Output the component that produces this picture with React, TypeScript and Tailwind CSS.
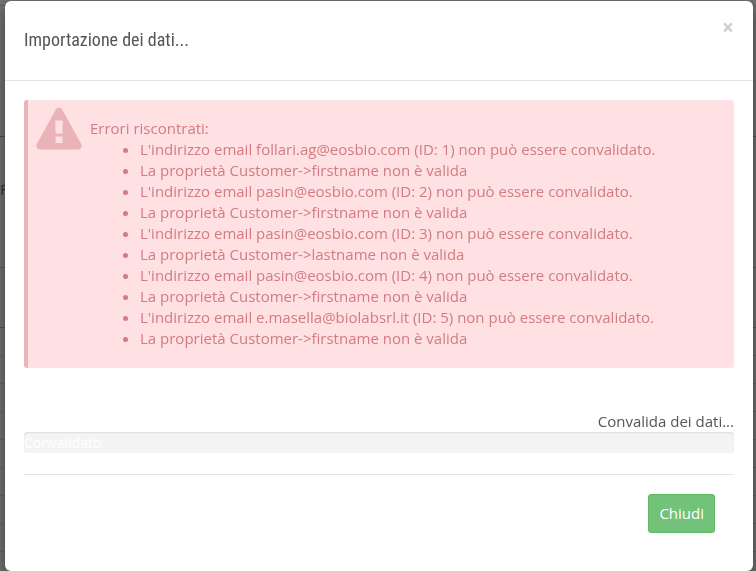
const errors = [
  "L'indirizzo email follari.ag@eosbio.com (ID: 1) non può essere convalidato.",
  'La proprietà Customer->firstname non è valida',
  "L'indirizzo email pasin@eosbio.com (ID: 2) non può essere convalidato.",
  'La proprietà Customer->firstname non è valida',
  "L'indirizzo email pasin@eosbio.com (ID: 3) non può essere convalidato.",
  'La proprietà Customer->lastname non è valida',
  "L'indirizzo email pasin@eosbio.com (ID: 4) non può essere convalidato.",
  'La proprietà Customer->firstname non è valida',
  "L'indirizzo email e.masella@biolabsrl.it (ID: 5) non può essere convalidato.",
  'La proprietà Customer->firstname non è valida',
];

const tableRows = [1, 2, 3, 4, 5, 6, 7, 8];

// Page dimmed behind the modal
function Backdrop() {
  return (
    <div aria-hidden="true" className="fixed inset-0 -z-10 overflow-hidden bg-[#747474] text-[#333]">
      <div className="h-1.5 border-b border-[#606060]"></div>
      <div className="h-[131px] border-b border-[#505050]"></div>
      <div className="h-[131px] border-b border-[#606060] pt-[42px] text-[15px] leading-[21px]">F</div>
      <div className="h-[60px] border-b border-[#4a5a66]"></div>
      {tableRows.map((row) => (
        <div key={row} className="h-7 border-b border-[#666]"></div>
      ))}
    </div>
  );
}

function WarningIcon() {
  return (
    <svg viewBox="0 0 46 43" className="h-[43px] w-[46px] shrink-0 fill-[#eab3b7]" aria-hidden="true">
      <path
        fillRule="evenodd"
        d="M23 0.5c1.4 0 2.5 0.7 3.2 1.9L45.2 37c1.4 2.6-0.3 5.5-3.2 5.5H4C1.1 42.5-0.6 39.6 0.8 37L19.8 2.4C20.5 1.2 21.6 0.5 23 0.5ZM19.3 13.500L19.6 26.500H26.400L26.700 13.500ZM19.600 29.500V36H26.400V29.500Z"
      />
    </svg>
  );
}

export default function App() {
  return (
    <div className="relative isolate min-h-screen pt-px pr-[7px] pl-[5px] font-['Open_Sans',sans-serif] text-[15px] leading-[21px] text-[#555]">
      <Backdrop />
      <div
        role="dialog"
        aria-labelledby="import-title"
        className="-mr-1 rounded-md bg-white pb-[38px] shadow-[0_5px_15px_rgba(0,0,0,0.5)]"
      >
        <div className="flex items-start justify-between border-b border-[#e5e5e5] px-[19px] pt-4 pb-[30px]">
          <h4
            id="import-title"
            className="pt-[13px] font-['Ubuntu_Condensed','Roboto_Condensed','Roboto',sans-serif] text-lg leading-5"
          >
            Importazione dei dati...
          </h4>
          <button type="button" aria-label="Close" className="text-[21px] leading-5 font-bold text-[#ccc]">
            ×
          </button>
        </div>

        <div className="px-[19px] pt-[19px]">
          <div className="flex rounded-[3px] border-l-4 border-[#eab3b7] bg-[#ffe1e3] pt-[7px] pb-[19px] pl-2 text-[#d27c82]">
            <WarningIcon />
            <div className="pt-[11px] pl-2">
              <p>Errori riscontrati:</p>
              <ul className="list-disc pl-[50px]">
                {errors.map((error, i) => (
                  <li key={i}>{error}</li>
                ))}
              </ul>
            </div>
          </div>

          <p className="mt-[43px] text-right">Convalida dei dati...</p>
          <div
            role="progressbar"
            aria-label="Convalida dei dati"
            aria-valuenow={0}
            className="h-[21px] overflow-hidden rounded-[3px] bg-[#f4f4f4] text-sm leading-[21px] text-white shadow-[inset_0_1px_2px_rgba(0,0,0,0.1)]"
          >
            Convalidato
          </div>

          <div className="mt-[21px] flex justify-end border-t border-[#e5e5e5] px-[19px] pt-[19px]">
            <button
              type="button"
              className="rounded-[3px] border border-[#5cb862] bg-[#72c279] px-2.5 py-2 text-white"
            >
              Chiudi
            </button>
          </div>
        </div>
      </div>
    </div>
  );
}
